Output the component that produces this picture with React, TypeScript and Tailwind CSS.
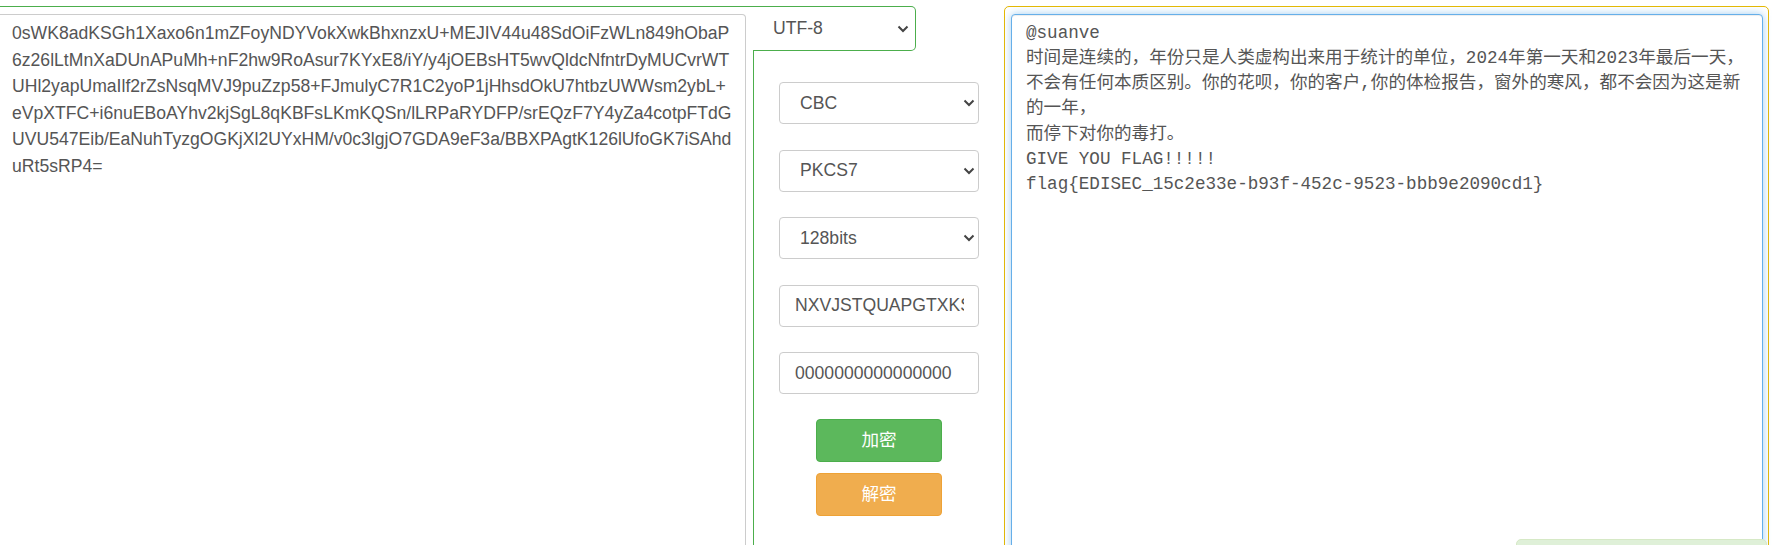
import React from 'react';

const CIPHER = [
  '0sWK8adKSGh1Xaxo6n1mZFoyNDYVokXwkBhxnzxU+MEJIV44u48SdOiFzWLn849hObaP',
  '6z26lLtMnXaDUnAPuMh+nF2hw9RoAsur7KYxE8/iY/y4jOEBsHT5wvQldcNfntrDyMUCvrWT',
  'UHl2yapUmaIlf2rZsNsqMVJ9puZzp58+FJmulyC7R1C2yoP1jHhsdOkU7htbzUWWsm2ybL+',
  'eVpXTFC+i6nuEBoAYhv2kjSgL8qKBFsLKmKQSn/lLRPaRYDFP/srEQzF7Y4yZa4cotpFTdG',
  'UVU547Eib/EaNuhTyzgOGKjXl2UYxHM/v0c3lgjO7GDA9eF3a/BBXPAgtK126lUfoGK7iSAhd',
  'uRt5sRP4=',
].join('\n');

const PLAIN = [
  '@suanve',
  '时间是连续的，年份只是人类虚构出来用于统计的单位，2024年第一天和2023年最后一天，',
  '不会有任何本质区别。你的花呗，你的客户,你的体检报告，窗外的寒风，都不会因为这是新',
  '的一年，',
  '而停下对你的毒打。',
  'GIVE YOU FLAG!!!!!',
  'flag{EDISEC_15c2e33e-b93f-452c-9523-bbb9e2090cd1}',
].join('\n');

function Chevron({ className }: { className: string }) {
  return (
    <svg
      width="12"
      height="8"
      viewBox="0 0 12 8"
      className={`pointer-events-none absolute top-1/2 -translate-y-1/2 ${className}`}>
      <path d="M1.5 1.5l4.5 4.5 4.5-4.5" fill="none" stroke="#444" strokeWidth="2" />
    </svg>
  );
}

function Select({ value, options }: { value: string; options: string[] }) {
  return (
    <div className="relative h-[42px] w-[200px]">
      <select
        defaultValue={value}
        className="h-full w-full appearance-none rounded-[4px] border border-[#ccc] bg-white pl-[20px] text-[17.6px] text-[#555] outline-none">
        {options.map((o) => (
          <option key={o}>{o}</option>
        ))}
      </select>
      <Chevron className="right-[4px]" />
    </div>
  );
}

function Field({ value }: { value: string }) {
  return (
    <input
      defaultValue={value}
      className="h-[42px] w-[200px] rounded-[4px] border border-[#ccc] bg-white pl-[15px] pr-[14px] text-[17.6px] text-[#555] outline-none"
    />
  );
}

export default function App() {
  return (
    <div
      className="relative flex h-[545px] w-[1772px] items-start overflow-hidden bg-white text-[#555]"
      style={{ fontFamily: '"Liberation Sans", "Noto Sans CJK SC", Arial, sans-serif' }}>
      {/* ciphertext */}
      <div className="w-[753px] shrink-0 pt-[6px]">
        <div className="border-t border-[#4cae4c]" />
        <textarea
          readOnly
          wrap="off"
          defaultValue={CIPHER}
          className="mt-[7px] block h-[600px] w-[746px] resize-none overflow-hidden rounded-r-[4px] border border-l-0 border-[#ccc] bg-white pl-[12px] pt-[5px] text-[17.6px] leading-[26.5px] text-[#555] outline-none"
        />
      </div>

      {/* options */}
      <div className="w-[251px] shrink-0 pt-[6px]">
        <div className="relative flex h-[45px] w-[163px] items-center rounded-r-[5px] border border-l-0 border-[#4cae4c] pl-[20px] text-[17.6px]">
          UTF-8
          <Chevron className="right-[6px]" />
        </div>
        <div className="flex h-[600px] flex-col border-l border-[#4cae4c] pl-[25px] pt-[31px]">
          <div className="flex w-[200px] flex-col gap-[25.5px]">
            <Select value="CBC" options={['ECB', 'CBC', 'CTR', 'OFB', 'CFB']} />
            <Select value="PKCS7" options={['PKCS7', 'ZeroPadding', 'NoPadding']} />
            <Select value="128bits" options={['128bits', '192bits', '256bits']} />
            <Field value="NXVJSTQUAPGTXKSW" />
            <Field value="0000000000000000" />
          </div>
          <div className="mt-[25px] flex w-[200px] flex-col items-center gap-[11px]">
            <button className="h-[43px] w-[126px] rounded-[4px] border border-[#4cae4c] bg-[#5cb85c] text-[17.6px] text-white">
              加密
            </button>
            <button className="h-[43px] w-[126px] rounded-[4px] border border-[#eea236] bg-[#f0ad4e] text-[17.6px] text-white">
              解密
            </button>
          </div>
        </div>
      </div>

      {/* plaintext */}
      <div className="w-[765px] shrink-0 pt-[6px]">
        <div className="rounded-[5px] border border-[#e6b800] pl-[6px] pr-[5px] pt-[7px]">
          <textarea
            readOnly
            wrap="off"
            defaultValue={PLAIN}
            className="block h-[600px] w-full resize-none overflow-hidden rounded-[4px] border border-[#66afe9] bg-white px-[14px] pt-[6px] text-[17.6px] leading-[25.14px] text-[#555] shadow-[inset_0_1px_1px_rgba(0,0,0,0.075),0_0_8px_rgba(102,175,233,0.6)] outline-none"
            style={{ fontFamily: '"Liberation Mono", "Noto Sans CJK SC", "Courier New", monospace' }}
          />
        </div>
      </div>

      {/* toast */}
      <div className="absolute left-[1516px] top-[539px] h-[40px] w-[251px] rounded-[5px] border border-[#d6e9c6] bg-[#dff0d8]" />
    </div>
  );
}
